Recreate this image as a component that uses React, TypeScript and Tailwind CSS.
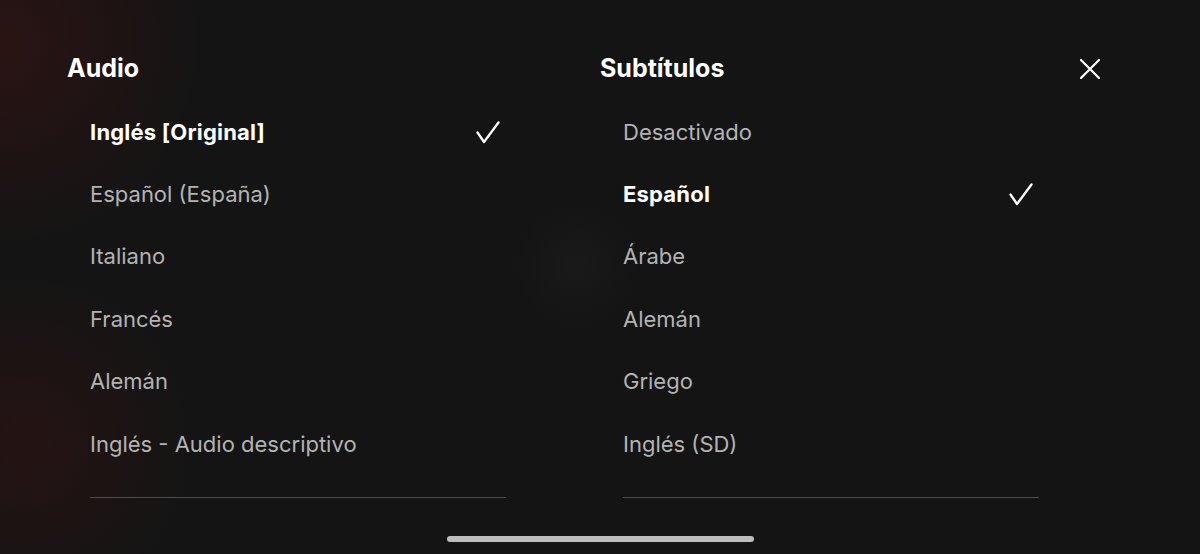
import React from "react";

const audio = [
    { label: "Inglés [Original]", selected: true },
    { label: "Español (España)" },
    { label: "Italiano" },
    { label: "Francés" },
    { label: "Alemán" },
    { label: "Inglés - Audio descriptivo" },
];

const subtitles = [
    { label: "Desactivado" },
    { label: "Español", selected: true },
    { label: "Árabe" },
    { label: "Alemán" },
    { label: "Griego" },
    { label: "Inglés (SD)" },
];

function Check() {
    return (
        <svg width="24" height="23" viewBox="0 0 24 23" fill="none">
            <path
                d="M1.5 11.5 L8 21 L22.5 1.5"
                stroke="#ffffff"
                strokeWidth="2.3"
                strokeLinecap="round"
                strokeLinejoin="round"
            />
        </svg>
    );
}

function Options({ items }: { items: { label: string; selected?: boolean }[] }) {
    return (
        <div className="ml-[23px] w-[416px]">
            {items.map((item) => (
                <div
                    key={item.label}
                    className="h-[62.4px] flex items-center justify-between pr-[6px]"
                >
                    <span
                        className={
                            item.selected
                                ? "text-[22px] font-bold tracking-[0.2px] text-white"
                                : "text-[22px] text-[#b3b3b3]"
                        }
                    >
                        {item.label}
                    </span>
                    {item.selected && <Check />}
                </div>
            ))}
            <div className="mt-[22px] h-px bg-[#4d4d4d]" />
        </div>
    );
}

export default function App() {
    return (
        <div
            className="relative w-[1200px] h-[554px] overflow-hidden bg-[#141414] bg-[radial-gradient(circle_at_0%_8%,rgba(70,18,18,0.45),transparent_16%),radial-gradient(circle_at_2%_80%,rgba(70,18,18,0.35),transparent_14%),radial-gradient(circle_at_48%_48%,rgba(34,34,34,0.4),transparent_9%)] font-['Inter','Noto_Sans',sans-serif]"
        >
            <div className="flex pl-[67px] pt-[51px]">
                <div className="w-[533px]">
                    <div className="h-[36px] flex items-center text-[25px] font-bold text-white">
                        Audio
                    </div>
                    <div className="mt-[14px]">
                        <Options items={audio} />
                    </div>
                </div>
                <div className="w-[500px]">
                    <div className="h-[36px] flex items-center justify-between text-[25px] font-bold text-white">
                        <span>Subtítulos</span>
                        <svg width="20" height="20" viewBox="0 0 20 20" fill="none" className="-mt-[1px]">
                            <path
                                d="M1 1 L19 19 M19 1 L1 19"
                                stroke="#ffffff"
                                strokeWidth="2.2"
                                strokeLinecap="round"
                            />
                        </svg>
                    </div>
                    <div className="mt-[14px]">
                        <Options items={subtitles} />
                    </div>
                </div>
            </div>
            <div className="absolute left-[447px] top-[536px] w-[307px] h-[6px] rounded-full bg-[#bdbdbd]" />
        </div>
    );
}
